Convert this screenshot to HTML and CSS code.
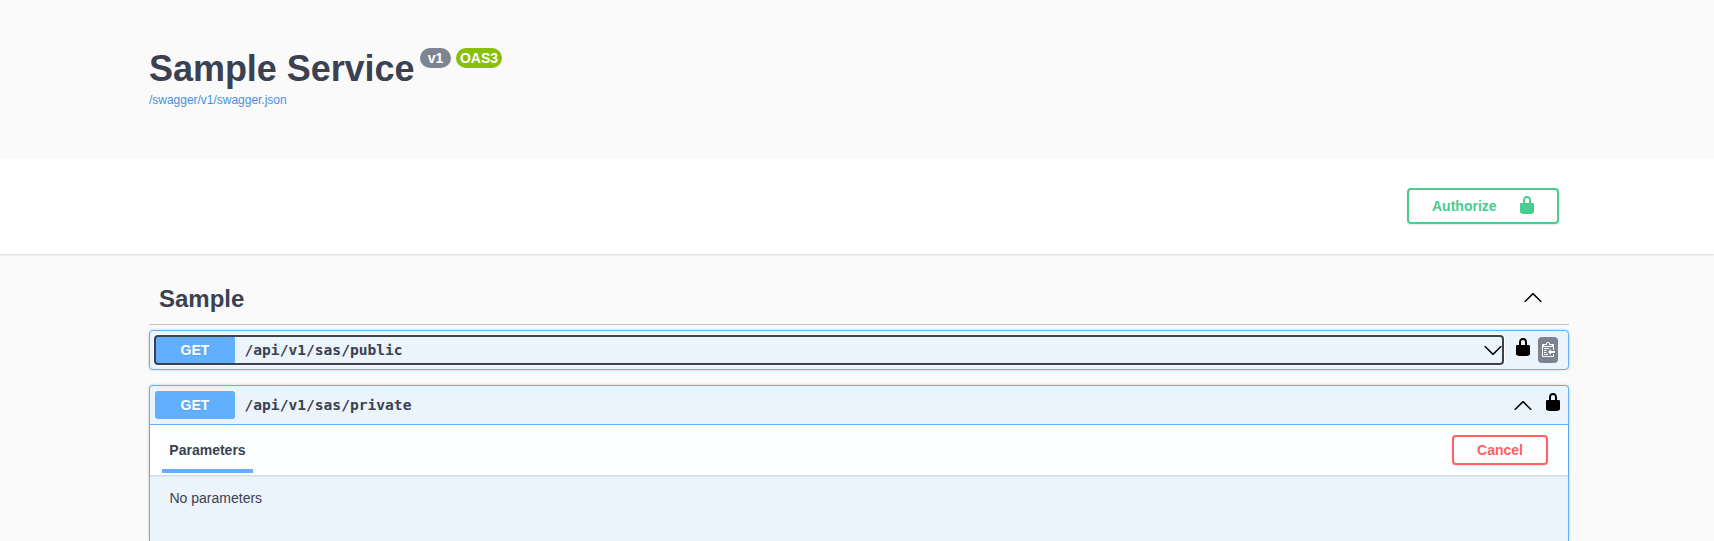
FILE: index.html
```html
<!DOCTYPE html>
<html lang="en">
<head>
<meta charset="utf-8">
<title>Sample Service</title>
<link rel="stylesheet" href="styles.css">
</head>
<body>
<svg class="defs" width="0" height="0" aria-hidden="true">
  <symbol id="locked" viewBox="0 0 20 20"><path d="M15.8 8H14V5.6C14 2.703 12.665 1 10 1 7.334 1 6 2.703 6 5.6V8H4c-.553 0-1 .646-1 1.199V17c0 .549.428 1.139.951 1.307l1.197.387C5.672 18.861 6.55 19 7.1 19h5.8c.549 0 1.428-.139 1.951-.307l1.196-.387c.524-.167.953-.757.953-1.306V9.199C17 8.646 16.352 8 15.8 8zM12 8H8V5.199C8 3.754 8.797 3 10 3c1.203 0 2 .754 2 2.199V8z"/></symbol>
  <symbol id="arrow-up" viewBox="0 0 20 20"><path d="M17.418 14.908c.272.268.709.268.979 0s.271-.701 0-.969l-7.908-7.83c-.27-.268-.707-.268-.979 0l-7.908 7.83c-.27.268-.27.701 0 .969.271.268.709.268.979 0L10 7.767l7.418 7.141z"/></symbol>
  <symbol id="arrow-down" viewBox="0 0 20 20"><path d="M17.418 6.109c.272-.268.709-.268.979 0s.271.701 0 .969l-7.908 7.83c-.27.268-.707.268-.979 0l-7.908-7.83c-.27-.268-.27-.701 0-.969.271-.268.709-.268.979 0L10 13.25l7.418-7.141z"/></symbol>
</svg>

<header class="info">
  <h1 class="title">Sample Service</h1>
  <span class="badges"><span class="badge">v1</span><span class="badge badge-oas">OAS3</span></span>
  <a class="spec-link">/swagger/v1/swagger.json</a>
</header>

<section class="scheme">
  <button class="btn authorize"><span>Authorize</span><svg class="icon"><use href="#locked"/></svg></button>
</section>

<main class="operations">
  <h2 class="tag"><span class="tag-name">Sample</span><svg class="icon"><use href="#arrow-up"/></svg></h2>

  <div class="opblock">
    <div class="summary summary-closed">
      <button class="control focused"><span class="method">GET</span><span class="path">/api/v1/sas/public</span><svg class="icon"><use href="#arrow-down"/></svg></button>
      <svg class="icon lock"><use href="#locked"/></svg>
      <span class="copy"><svg width="15" height="16"><path d="M4 12h4v1H4v-1zm5-6H4v1h5V6zm2 3V7l-3 3 3 3v-2h5V9h-5zM6.5 8H4v1h2.5V8zM4 11h2.5v-1H4v1zm9 1h1v2c-.02.28-.11.52-.3.7-.19.18-.42.28-.7.3H3c-.55 0-1-.45-1-1V3c0-.55.45-1 1-1h3c0-1.11.89-2 2-2 1.11 0 2 .89 2 2h3c.55 0 1 .45 1 1v5h-1V5H3v9h10v-2zM4 4h8c0-.55-.45-1-1-1h-1c-.55 0-1-.45-1-1s-.45-1-1-1-1 .45-1 1-.45 1-1 1H5c-.55 0-1 .45-1 1z"/></svg></span>
    </div>
  </div>

  <div class="opblock opblock-open">
    <div class="summary summary-open">
      <button class="control"><span class="method">GET</span><span class="path">/api/v1/sas/private</span><svg class="icon"><use href="#arrow-up"/></svg></button>
      <svg class="icon lock"><use href="#locked"/></svg>
    </div>
    <div class="section-header">
      <h4 class="tab">Parameters</h4>
      <button class="btn cancel">Cancel</button>
    </div>
    <p class="empty">No parameters</p>
  </div>
</main>
</body>
</html>
```

FILE: styles.css
```css
* { box-sizing: border-box; }

html { overflow: hidden; }

body {
  margin: 0;
  height: 541px;
  overflow: hidden;
  background: #fafafa;
  color: #3b4151;
  font-family: "Liberation Sans", Arial, sans-serif;
}

.defs { position: absolute; }

button {
  margin: 0;
  padding: 0;
  border: 0;
  background: none;
  color: inherit;
  font: inherit;
}

.icon { display: block; flex: none; width: 20px; height: 20px; }

.info {
  display: grid;
  grid-template-columns: 265px 1fr;
  align-content: start;
  column-gap: 6px;
  height: 158px;
  padding: 48px 0 0 149px;
}

.title {
  margin: 0;
  font-size: 36px;
  letter-spacing: -.05px;
  line-height: 41px;
  white-space: nowrap;
}

.badges { display: flex; gap: 5px; }

.badge {
  width: 31px;
  height: 20px;
  border-radius: 10px;
  background: #7d8492;
  color: #fff;
  font-size: 14px;
  font-weight: 700;
  line-height: 20px;
  text-align: center;
}

.badge-oas { width: 46px; background: #89bf04; }

.spec-link {
  grid-column: 1 / -1;
  margin-top: 4px;
  color: #4990e2;
  font-size: 12px;
  letter-spacing: -.02px;
  line-height: 14px;
}

.scheme {
  display: flex;
  justify-content: flex-end;
  height: 96px;
  padding: 30px 155px 0 0;
  background: #fff;
  box-shadow: 0 1px 2px rgba(0, 0, 0, .15);
}

.btn {
  border: 2px solid;
  border-radius: 4px;
  box-shadow: 0 1px 2px rgba(0, 0, 0, .1);
  font-size: 14px;
  font-weight: 700;
}

.authorize {
  display: flex;
  justify-content: space-between;
  width: 152px;
  height: 36px;
  padding: 5px 20px 0 23px;
  border-color: #49cc90;
  color: #49cc90;
  line-height: 22px;
}

.authorize .icon { fill: #49cc90; }

.operations { width: 1420px; margin: 0 0 0 149px; padding-top: 20px; }

.tag {
  display: flex;
  align-items: center;
  justify-content: space-between;
  height: 51px;
  margin: 0 0 5px;
  padding: 0 26px 4px 10px;
  border-bottom: 1px solid rgba(59, 65, 81, .3);
  font-size: 24px;
  line-height: 30px;
}

.tag-name { padding-top: 4px; }

.opblock {
  margin-bottom: 15px;
  border: 1px solid #61affe;
  border-radius: 4px;
  background: #ebf3fb;
  box-shadow: 0 0 3px rgba(0, 0, 0, .19);
}

.opblock-open {
  height: 156px;
  margin-bottom: 0;
  border-bottom: 0;
  border-radius: 4px 4px 0 0;
}

.summary { display: flex; align-items: center; padding-left: 5px; }

.summary-closed { height: 38px; }

.summary-open { height: 39px; border-bottom: 1px solid #61affe; }

.control {
  display: flex;
  align-items: center;
  width: 1378px;
  height: 28px;
  text-align: left;
}

.summary-closed .focused {
  width: 1348px;
  border-radius: 3px;
  outline: 2px solid #3b4151;
  outline-offset: -1px;
  box-shadow: 0 0 0 2px #fff;
}

.method {
  width: 80px;
  height: 28px;
  border-radius: 3px;
  background: #61affe;
  color: #fff;
  font-size: 14px;
  font-weight: 700;
  line-height: 28px;
  text-align: center;
  text-shadow: 0 1px 0 rgba(0, 0, 0, .1);
}

.path {
  flex: 1;
  margin-top: -1px;
  padding-left: 9.5px;
  font-family: "DejaVu Sans Mono", monospace;
  font-size: 14.6px;
  font-weight: 700;
}

.lock { margin: -6px 0 0 10px; }

.copy {
  width: 20px;
  height: 26px;
  margin-left: 5px;
  padding: 5px 0 0 2px;
  border-radius: 4px;
  background: #7d8293;
}

.copy svg { display: block; fill: #fff; }

.section-header {
  display: flex;
  align-items: flex-start;
  justify-content: space-between;
  height: 50px;
  padding: 10px 20px 0 12px;
  background: rgba(255, 255, 255, .85);
  box-shadow: 0 1px 2px rgba(0, 0, 0, .15);
}

.tab {
  width: 91px;
  height: 38px;
  margin: 0;
  border-bottom: 4px solid #61affe;
  font-size: 14px;
  line-height: 30px;
  text-align: center;
}

.cancel {
  width: 96px;
  height: 30px;
  border-color: #ff6060;
  color: #ff6060;
  line-height: 26px;
}

.empty { margin: 0; padding: 15px 19.5px; font-size: 14px; line-height: 16px; }
```
